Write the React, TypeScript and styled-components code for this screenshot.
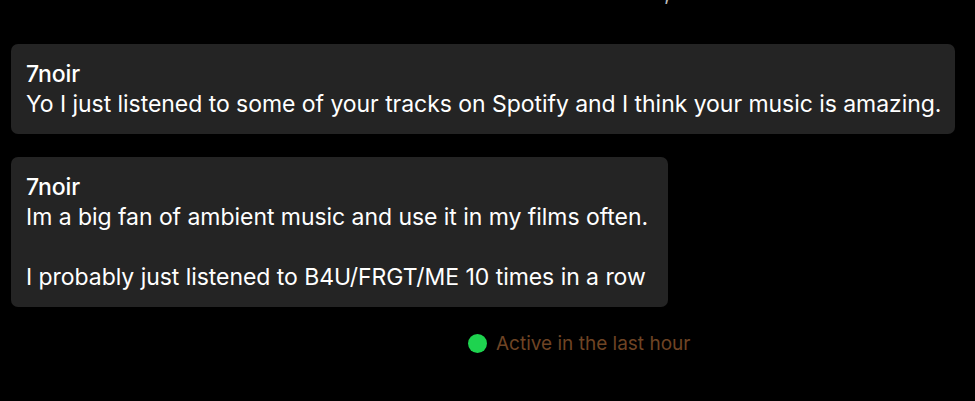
import React from 'react'
import styled, { createGlobalStyle } from 'styled-components'

const GlobalStyle = createGlobalStyle`
	html, body {
		margin: 0;
		padding: 0;
		background: #000;
	}
	body {
		font-family: Inter, "Noto Sans", sans-serif;
		color: #fff;
	}
`

const Page = styled.div`
	width: 975px;
	height: 401px;
	background: #000;
	overflow: hidden;
	display: flex;
	flex-direction: column;
`

const CutLine = styled.div`
	height: 6px;
	overflow: hidden;
	padding-left: 664px;
	color: #bbb;
	font-size: 22px;
	line-height: 30px;

	span {
		display: block;
		margin-top: -23px;
	}
`

const Thread = styled.div`
	display: flex;
	flex-direction: column;
	align-items: flex-start;
	gap: 23px;
	padding: 38px 20px 0 11px;
`

const Bubble = styled.div<{ $full?: boolean }>`
	background: #242424;
	border-radius: 7px;
	padding: 15px 20px 15px 15px;
	width: ${p => (p.$full ? '100%' : 'auto')};
	box-sizing: border-box;
	font-size: 23px;
	line-height: 30px;
	letter-spacing: -0.05px;
`

const Author = styled.div`
	font-weight: 500;
`

const Line = styled.div`
	min-height: 30px;
	white-space: nowrap;
`

const Status = styled.div`
	display: flex;
	align-items: center;
	gap: 9px;
	padding: 25px 0 0 468px;
	font-size: 19px;
	color: #6f4424;
`

const Dot = styled.span`
	width: 19px;
	height: 19px;
	border-radius: 50%;
	background: #1ed34f;
	flex: none;
`

const messages = [
	{ author: '7noir', lines: ['Yo I just listened to some of your tracks on Spotify and I think your music is amazing.'], full: true },
	{
		author: '7noir',
		lines: [
			'Im a big fan of ambient music and use it in my films often.',
			'',
			'I probably just listened to B4U/FRGT/ME 10 times in a row',
		],
		full: false,
	},
]

export default function App() {
	return (
		<Page>
			<GlobalStyle />
			<CutLine>
				<span>,</span>
			</CutLine>
			<Thread>
				{messages.map((m, i) => (
					<Bubble key={i} $full={m.full}>
						<Author>{m.author}</Author>
						{m.lines.map((l, j) => (
							<Line key={j}>{l}</Line>
						))}
					</Bubble>
				))}
			</Thread>
			<Status>
				<Dot />
				Active in the last hour
			</Status>
		</Page>
	)
}
